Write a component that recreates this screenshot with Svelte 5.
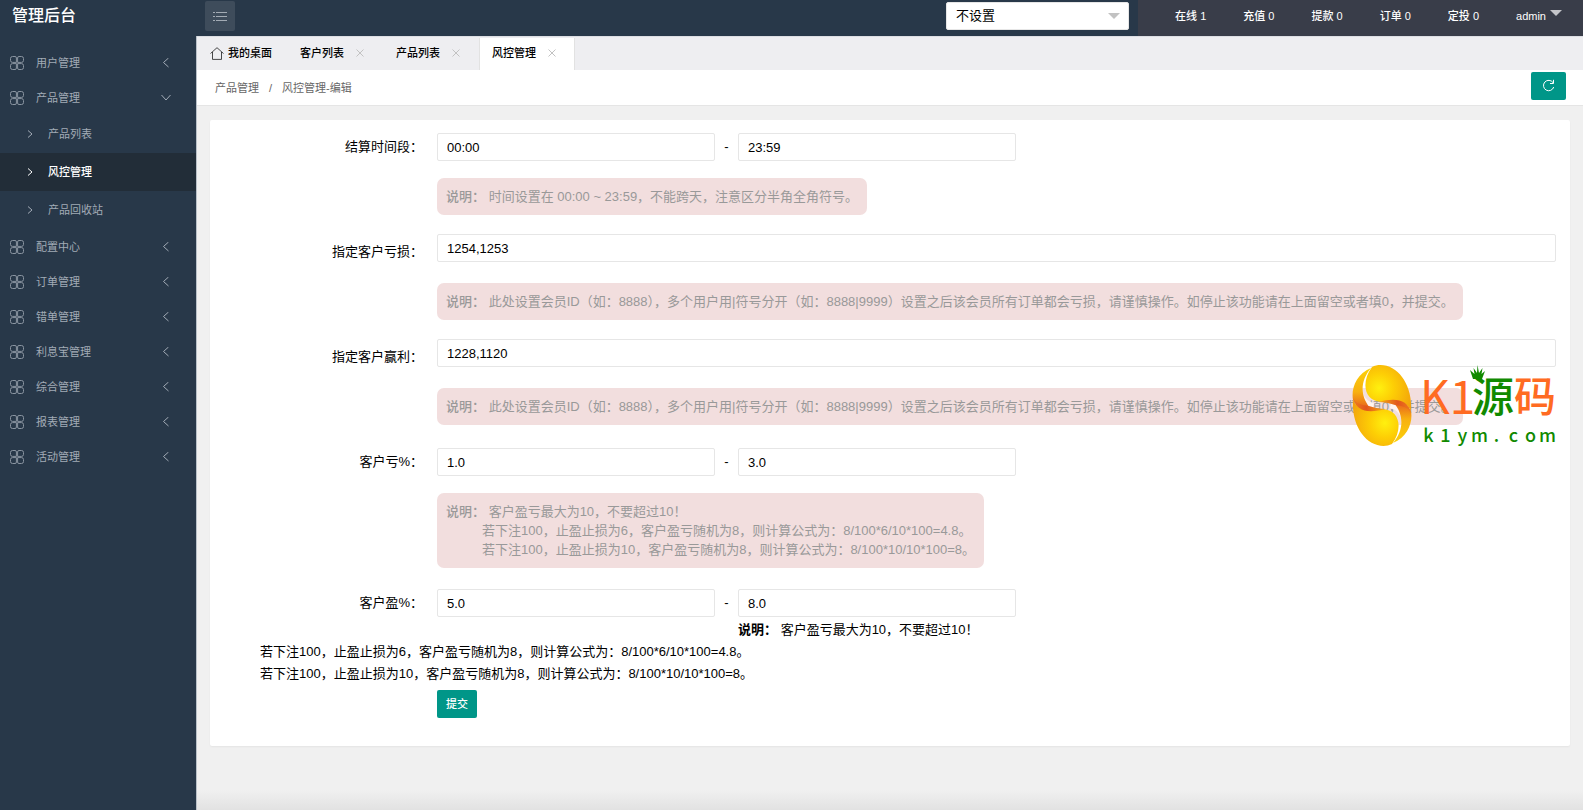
<script lang="ts">
  type MenuItem = { name: string; open?: boolean; children?: { name: string; active?: boolean }[] }

  const menu: MenuItem[] = [
    { name: '用户管理' },
    {
      name: '产品管理',
      open: true,
      children: [{ name: '产品列表' }, { name: '风控管理', active: true }, { name: '产品回收站' }]
    },
    { name: '配置中心' },
    { name: '订单管理' },
    { name: '错单管理' },
    { name: '利息宝管理' },
    { name: '综合管理' },
    { name: '报表管理' },
    { name: '活动管理' }
  ]
  const counters = [
    { name: '在线', count: 1 },
    { name: '充值', count: 0 },
    { name: '提款', count: 0 },
    { name: '订单', count: 0 },
    { name: '定投', count: 0 }
  ]
  const tabs = ['客户列表', '产品列表', '风控管理']
  const site = 'k1ym.com'

  let current = $state('风控管理')
  let form = $state({
    start: '00:00',
    end: '23:59',
    loss: '1254,1253',
    win: '1228,1120',
    lossMin: '1.0',
    lossMax: '3.0',
    winMin: '5.0',
    winMax: '8.0'
  })
</script>

<div class="app">
  <header>
    <h1>管理后台</h1>
    <button class="toggle" aria-label="菜单">
      <svg width="14" height="10" viewBox="0 0 14 10" stroke="currentColor" stroke-width="1">
        <path d="M0 1.5h2M3 1.5h11M0 5.5h2M3 5.5h11M0 9.5h2M3 9.5h11" />
      </svg>
    </button>
    <div class="voice">
      <select aria-label="设置">
        <option>不设置</option>
      </select>
    </div>
    <nav class="counters">
      {#each counters as c}
        <a href="#top">{c.name} {c.count}</a>
      {/each}
      <a href="#top" class="user">admin <i class="caret"></i></a>
    </nav>
  </header>

  <div class="body">
    <aside>
      <ul class="menu">
        {#each menu as item}
          <li>
            <a href="#top" class="item">
              <svg class="grid-icon" width="14" height="14" viewBox="0 0 14 14" fill="none" stroke="currentColor">
                <path d="M2.5.5H5A1.4 1.4 0 0 1 6.4 2v4.4H2.5A2 2 0 0 1 .5 4.4V2.5a2 2 0 0 1 2-2z" />
                <path d="M11.5.5H9A1.4 1.4 0 0 0 7.6 2v4.4h3.9a2 2 0 0 0 2-2V2.5a2 2 0 0 0-2-2z" />
                <path d="M2.5 13.5H5A1.4 1.4 0 0 0 6.4 12V7.6H2.5a2 2 0 0 0-2 2v1.9a2 2 0 0 0 2 2z" />
                <path d="M11.5 13.5H9A1.4 1.4 0 0 1 7.6 12V7.6h3.9a2 2 0 0 1 2 2v1.9a2 2 0 0 1-2 2z" />
              </svg>
              <span>{item.name}</span>
              <svg class="arrow" width="10" height="10" viewBox="0 0 10 10" fill="none" stroke="currentColor">
                {#if item.open}
                  <path d="M.5 2L5 7l4.500-5" />
                {:else}
                  <path d="M7.500 0L2.500 4.500l5 4.500" />
                {/if}
              </svg>
            </a>
            {#if item.children}
              <ul class="sub">
                {#each item.children as child}
                  <li>
                    <a href="#top" class:active={child.active}>
                      <svg width="6" height="8" viewBox="0 0 6 8" fill="none" stroke="currentColor">
                        <path d="M1 .5L5 4 1 7.500" />
                      </svg>
                      <span>{child.name}</span>
                    </a>
                  </li>
                {/each}
              </ul>
            {/if}
          </li>
        {/each}
      </ul>
    </aside>

    <main>
      <div class="tabs">
        <button class="tab home">
          <svg width="14" height="13" viewBox="0 0 14 13" fill="none" stroke="currentColor" stroke-width="0.7">
            <path d="M.5 6.500L7 .7l6.500 5.800M2.500 5v7.400h9V5" />
          </svg>
          我的桌面
        </button>
        {#each tabs as tab}
          <button class="tab" class:current={tab === current} onclick={() => (current = tab)}>
            {tab}
            <svg class="close" width="8" height="8" viewBox="0 0 8 8" stroke="currentColor">
              <path d="M.5.5l7 7M7.500.5l-7 7" />
            </svg>
          </button>
        {/each}
      </div>

      <div class="crumbs">
        <a href="#top">产品管理</a>
        <span>/</span>
        <a href="#top">风控管理-编辑</a>
        <button class="refresh" aria-label="刷新">
          <svg width="13" height="14" viewBox="0 0 13 14" fill="none" stroke="currentColor">
            <path d="M11 3.600A5.200 5.200 0 1 0 11.700 8M11.500.8v3.700H8" />
          </svg>
        </button>
      </div>

      <div class="page">
        <form class="card" onsubmit={(e) => e.preventDefault()}>
          <div class="row">
            <label for="start">结算时间段：</label>
            <div class="field pair">
              <input id="start" bind:value={form.start} />
              <span>-</span>
              <input aria-label="结束时间" bind:value={form.end} />
            </div>
          </div>
          <div class="tip"><b>说明：</b> 时间设置在 00:00 ~ 23:59，不能跨天，注意区分半角全角符号。</div>

          <div class="row">
            <label for="loss">指定客户亏损：</label>
            <div class="field"><input id="loss" bind:value={form.loss} /></div>
          </div>
          <div class="tip">
            <b>说明：</b> 此处设置会员ID（如：8888），多个用户用|符号分开（如：8888|9999）设置之后该会员所有订单都会亏损，请谨慎操作。如停止该功能请在上面留空或者填0，并提交。
          </div>

          <div class="row">
            <label for="win">指定客户赢利：</label>
            <div class="field"><input id="win" bind:value={form.win} /></div>
          </div>
          <div class="tip">
            <b>说明：</b> 此处设置会员ID（如：8888），多个用户用|符号分开（如：8888|9999）设置之后该会员所有订单都会亏损，请谨慎操作。如停止该功能请在上面留空或者填0，并提交。
          </div>

          <div class="row">
            <label for="loss-min">客户亏%：</label>
            <div class="field pair">
              <input id="loss-min" bind:value={form.lossMin} />
              <span>-</span>
              <input aria-label="客户亏最大" bind:value={form.lossMax} />
            </div>
          </div>
          <div class="tip">
            <b>说明：</b> 客户盈亏最大为10，不要超过10！
            <p>若下注100，止盈止损为6，客户盈亏随机为8，则计算公式为：8/100*6/10*100=4.8。</p>
            <p>若下注100，止盈止损为10，客户盈亏随机为8，则计算公式为：8/100*10/10*100=8。</p>
          </div>

          <div class="row last">
            <label for="win-min">客户盈%：</label>
            <div class="field pair">
              <input id="win-min" bind:value={form.winMin} />
              <span>-</span>
              <input aria-label="客户盈最大" bind:value={form.winMax} />
            </div>
          </div>
          <div class="notes">
            <p class="first"><b>说明：</b> 客户盈亏最大为10，不要超过10！</p>
            <p>若下注100，止盈止损为6，客户盈亏随机为8，则计算公式为：8/100*6/10*100=4.8。</p>
            <p>若下注100，止盈止损为10，客户盈亏随机为8，则计算公式为：8/100*10/10*100=8。</p>
          </div>
          <button class="submit">提交</button>

          <div class="brand">
            <svg width="60" height="81" viewBox="0 0 60 81">
              <defs>
                <radialGradient id="gold" cx="0.3" cy="0.5" r="0.8">
                  <stop offset="0" stop-color="#fff00f" />
                  <stop offset="0.4" stop-color="#fdce05" />
                  <stop offset="1" stop-color="#f2a00c" />
                </radialGradient>
                <linearGradient id="rim" x1="0" y1="0" x2="0" y2="1">
                  <stop offset="0" stop-color="#fbd20a" />
                  <stop offset="0.6" stop-color="#f8b010" />
                  <stop offset="1" stop-color="#e8641c" />
                </linearGradient>
                <linearGradient id="flame" x1="0" x2="1">
                  <stop offset="0" stop-color="#ee7d1c" />
                  <stop offset="0.4" stop-color="#e2551c" />
                  <stop offset="1" stop-color="#f8b510" />
                </linearGradient>
                <g id="half">
                  <path d="M20 2C6 18 8 35 22 38L21 43 17 42C8 31 8 15 20 2z" fill="#fff4ee" />
                  <path d="M20 2C30-3 43 2 50 12C56 20 60 32 59 46C54 36 46 35 35 36.500C12 40 8 18 20 2z" fill="url(#gold)" />
                  <path d="M19 3C4 9-1 24 1 35C4 41 9 43 18 43C8 31 8 16 19 3z" fill="url(#rim)" />
                </g>
                <path id="tongue" d="M1 32C3 39 10 40 17 41C23 43 28 44 34 44C18 48 4 48 1 32z" fill="url(#flame)" />
              </defs>
              <use href="#half" />
              <use href="#half" transform="rotate(180 30 40.5)" />
              <use href="#tongue" />
              <use href="#tongue" transform="rotate(180 30 40.5)" />
            </svg>
            <div class="words">
              <div class="big">
                <span class="latin">K1</span><span class="yuan">源</span><span>码</span>
                <svg class="crown" width="15" height="15" viewBox="0 0 15 15">
                  <path d="M3 14L0 5l4.500 4L3.500 3 7 8 7.500 0 9 8l3.500-5-1 6L15 6l-3 8z" fill="#118a00" />
                </svg>
              </div>
              <div class="site">
                {#each site as letter}<span>{letter}</span>{/each}
              </div>
            </div>
          </div>
        </form>
      </div>
    </main>
  </div>
</div>

<style>
  :global(body) {
    background: #f0f0f0;
  }
  .app {
    min-height: 100vh;
    display: flex;
    flex-direction: column;
    font: 11px/18px "Liberation Sans", "Noto Sans CJK SC", sans-serif;
    color: #000;
  }
  .app :global(*) {
    box-sizing: border-box;
  }
  a {
    color: inherit;
    text-decoration: none;
  }
  ul {
    list-style: none;
    margin: 0;
    padding: 0;
  }
  p,
  h1 {
    margin: 0;
  }
  button {
    border: 0;
    padding: 0;
    font: inherit;
    color: inherit;
    background: none;
    cursor: pointer;
  }

  header {
    display: flex;
    align-items: center;
    height: 36px;
    padding-bottom: 4px;
    background: #283849;
    color: #fff;
  }
  h1 {
    width: 205px;
    padding-left: 12px;
    font-size: 16px;
    font-weight: 500;
  }
  .toggle {
    display: flex;
    align-items: center;
    justify-content: center;
    width: 30px;
    height: 30px;
    border-radius: 2px;
    background: #3e4c5b;
    color: #a3abb4;
  }
  .voice {
    position: relative;
    margin-left: auto;
    margin-right: 9px;
  }
  .voice::after {
    content: '';
    position: absolute;
    right: 9px;
    top: 11px;
    border: 6px solid transparent;
    border-top-color: #c2c2c2;
    border-bottom: 0;
    pointer-events: none;
  }
  select {
    display: block;
    appearance: none;
    width: 183px;
    height: 28px;
    padding: 0 9px;
    border: 1px solid #e6e6e6;
    border-radius: 2px;
    background: #fff;
    font: inherit;
    font-size: 13px;
    color: #000;
  }
  .counters {
    display: flex;
    align-items: center;
    align-self: flex-start;
    height: 36px;
    padding: 0 21px 4px 37px;
    gap: 37px;
    background: #393d49;
    font-weight: 500;
  }
  .user {
    display: flex;
    gap: 4px;
  }
  .caret {
    margin-top: 3px;
    height: 6px;
    border: 6px solid transparent;
    border-top-color: #c4c5c9;
    border-bottom: 0;
  }

  .body {
    flex: 1;
    display: flex;
  }
  aside {
    flex: none;
    width: 197px;
    padding-top: 9px;
    border-right: 1px solid #b9c0c8;
    background: #283849;
    color: #a2abb6;
  }
  .item {
    display: flex;
    align-items: center;
    height: 35px;
    padding: 0 25px 0 10px;
  }
  .item span {
    flex: 1;
    padding-left: 12px;
  }
  .grid-icon {
    opacity: 0.8;
  }
  .sub a {
    display: flex;
    align-items: center;
    gap: 15px;
    height: 38px;
    padding-left: 27px;
  }
  .sub .active {
    background: #222d38;
    color: #fff;
    font-weight: 500;
  }

  main {
    flex: 1;
    min-width: 0;
    display: flex;
    flex-direction: column;
  }
  .tabs {
    display: flex;
    height: 34px;
    padding-top: 1px;
    border-top: 1px solid #dcdee3;
    background: #eeeef1;
  }
  .tab {
    display: flex;
    align-items: center;
    gap: 12px;
    width: 96px;
    padding-left: 12px;
    padding-bottom: 2px;
    border-right: 1px solid transparent;
    border-left: 1px solid transparent;
    font-weight: 500;
  }
  .home {
    width: 90px;
    gap: 4px;
  }
  .current {
    border-color: #e2e2e2;
    background: #fff;
  }
  .close {
    color: #c2c2c2;
  }
  .crumbs {
    display: flex;
    align-items: center;
    gap: 10px;
    height: 36px;
    padding: 0 17px 0 18px;
    border-bottom: 1px solid #e5e5e5;
    background: #fff;
    color: #666;
  }
  .refresh {
    display: flex;
    align-items: center;
    justify-content: center;
    width: 35px;
    height: 28px;
    margin-left: auto;
    margin-bottom: 4px;
    border-radius: 2px;
    background: #009688;
    color: #fff;
  }

  .page {
    flex: 1;
    padding: 14px 13px 20px;
    background: linear-gradient(to top, #e2e2e2, #f0f0f0 20px);
  }
  .card {
    position: relative;
    padding: 9px 14px 28px;
    border-radius: 2px;
    background: #fff;
    box-shadow: 0 1px 2px rgba(0, 0, 0, 0.05);
    font-size: 13px;
  }
  .row {
    display: flex;
    height: 36px;
  }
  label {
    flex: none;
    width: 213px;
    padding-right: 14px;
    line-height: 36px;
    text-align: right;
    white-space: nowrap;
  }
  .field {
    flex: 1;
    display: flex;
  }
  input {
    flex: 1;
    min-width: 0;
    height: 28px;
    padding: 0 9px;
    border: 1px solid #e6e6e6;
    border-radius: 2px;
    background: #fff;
    font: inherit;
    color: #000;
  }
  .pair {
    padding-top: 4px;
  }
  .pair input {
    flex: 0 1 278px;
  }
  .pair span {
    width: 23px;
    line-height: 28px;
    text-align: center;
  }
  .last {
    height: 32px;
  }
  .last label {
    line-height: 32px;
  }
  .last .pair {
    padding-top: 2px;
  }
  .tip {
    width: fit-content;
    margin: 13px 0 19px 213px;
    padding: 9px;
    border-radius: 7px;
    background: #f2dede;
    color: #999;
    line-height: 19px;
  }
  .tip b {
    font-weight: 500;
  }
  .tip p {
    padding-left: 36px;
  }
  .notes {
    padding-left: 36px;
    line-height: 22px;
  }
  .notes .first {
    padding-left: 478px;
  }
  .submit {
    display: block;
    height: 28px;
    margin: 5px 0 0 213px;
    padding: 0 9px;
    border-radius: 2px;
    background: #009688;
    color: #fff;
    font-size: 11px;
    font-weight: 500;
  }

  /* logo floats over the form */
  .brand {
    position: absolute;
    right: 14px;
    top: 245px;
    display: flex;
    gap: 8px;
    color: #118a00;
  }
  .big {
    position: relative;
    display: flex;
    height: 58px;
    align-items: center;
    color: #ff6b22;
    font: 500 42px/56px "Noto Sans CJK SC", sans-serif;
  }
  .latin {
    width: 52px;
    font-size: 46px;
    font-weight: 400;
  }
  .yuan {
    color: #118a00;
  }
  .crown {
    position: absolute;
    left: 50px;
    top: 0;
  }
  .site {
    display: flex;
    font: 500 18px/22px "Noto Sans CJK SC", sans-serif;
  }
  .site span {
    width: 17px;
    text-align: center;
  }
</style>
